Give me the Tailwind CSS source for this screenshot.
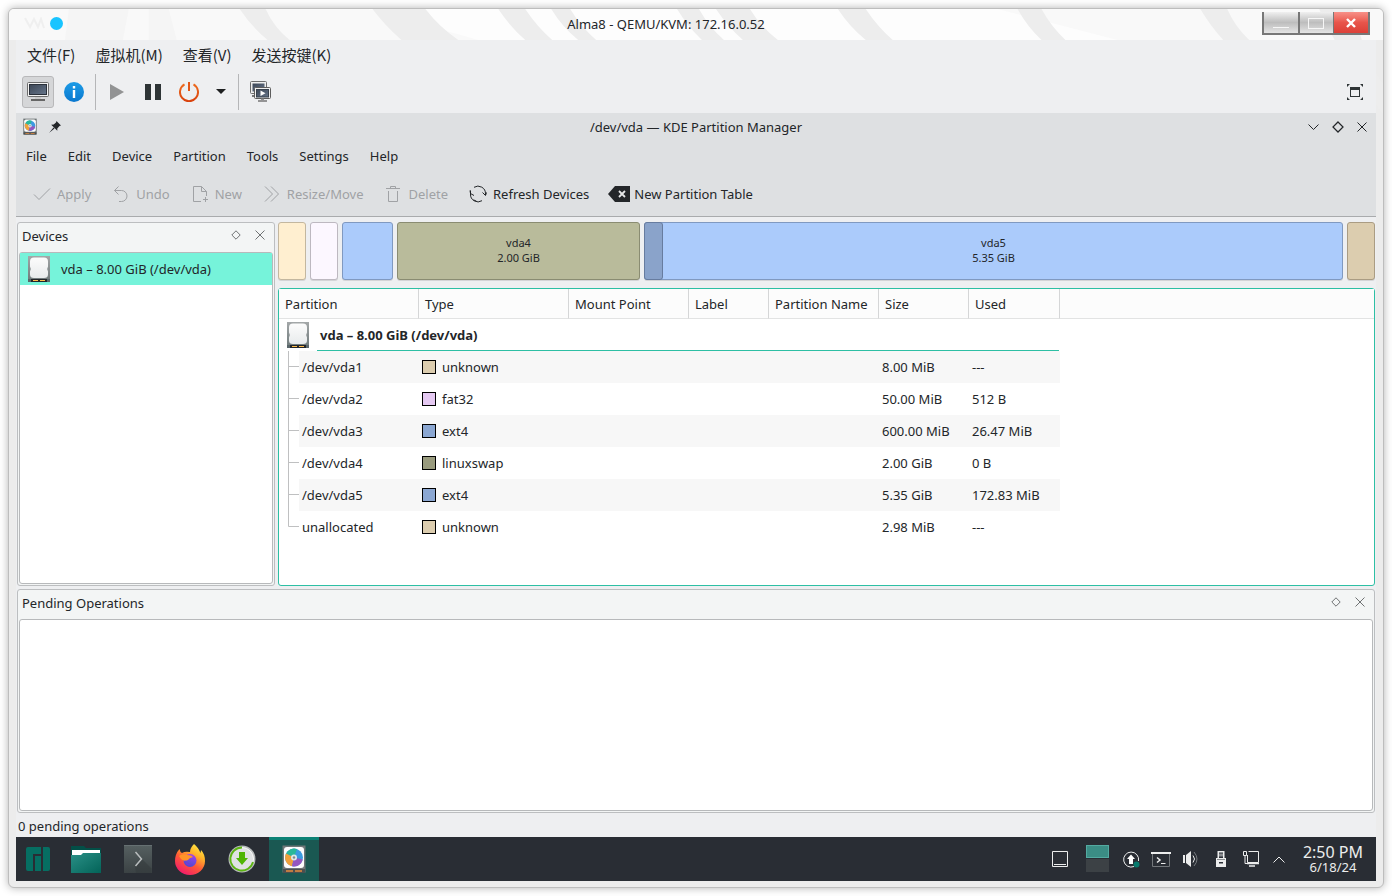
<!DOCTYPE html>
<html lang="en">
<head>
<meta charset="utf-8">
<title>Alma8 - QEMU/KVM</title>
<script src="https://cdn.jsdelivr.net/npm/@tailwindcss/browser@4"></script>
</head>
<body class="bg-white font-['Noto_Sans','Noto_Sans_CJK_SC',sans-serif] text-[13px] leading-5 text-[#232629]">
<svg class="absolute size-0" aria-hidden="true">
  <defs>
    <linearGradient id="screen" x1="0" y1="0" x2="1" y2="1"><stop offset="0" stop-color="#3c4655"/><stop offset="1" stop-color="#66758a"/></linearGradient>
    <linearGradient id="drive" x1="0" y1="0" x2="0" y2="1"><stop offset="0" stop-color="#a4a8a9"/><stop offset="1" stop-color="#6c7778"/></linearGradient>
    <linearGradient id="plate" x1="0" y1="0" x2="0" y2="1"><stop offset="0" stop-color="#fcfcfc"/><stop offset="1" stop-color="#e8ebec"/></linearGradient>
    <linearGradient id="info" x1="0" y1="0" x2="0" y2="1"><stop offset="0" stop-color="#1c9be6"/><stop offset="1" stop-color="#0a78cf"/></linearGradient>
    <linearGradient id="power" x1="0" y1="0" x2="0" y2="1"><stop offset="0" stop-color="#ed6b1f"/><stop offset="1" stop-color="#d9420d"/></linearGradient>
    <linearGradient id="folder" x1="0" y1="0" x2="1" y2="1"><stop offset="0" stop-color="#2a9087"/><stop offset="1" stop-color="#036358"/></linearGradient>
    <linearGradient id="term" x1="0" y1="0" x2="0" y2="1"><stop offset="0" stop-color="#566061"/><stop offset="1" stop-color="#3b4244"/></linearGradient>
    <linearGradient id="fox" x1="0.85" y1="0" x2="0.25" y2="1"><stop offset="0" stop-color="#fff04a"/><stop offset="0.3" stop-color="#ffb72a"/><stop offset="0.6" stop-color="#ff5a36"/><stop offset="1" stop-color="#f0166f"/></linearGradient>
    <linearGradient id="globe" x1="0.7" y1="0" x2="0.3" y2="1"><stop offset="0" stop-color="#a240f0"/><stop offset="1" stop-color="#4350c8"/></linearGradient>
    <symbol id="hdd" viewBox="0 0 22 26">
      <rect width="22" height="26" fill="url(#drive)"/>
      <path d="M6 1.500h10q4 0 4 4v5q-1.500 2 0 5v3q0 3.500-4 3.500H6q-4 0-4-3.500v-3q1.500-3 0-5v-5q0-4 4-4z" fill="url(#plate)"/>
      <rect y="23" width="22" height="3" fill="#59666a"/><rect x="3" y="23" width="16" height="3" fill="#232629"/>
      <path d="M5 24.500h5M12 24.500h5" stroke="#fdbc4b" stroke-width="1"/>
    </symbol>
    <symbol id="pm" viewBox="0 0 24 28">
      <rect x="0.500" y="0.500" width="23" height="27" fill="#6f7677"/>
      <rect x="2" y="2" width="20" height="21" rx="3" fill="#fcfcfc"/>
      <circle cx="12" cy="12.500" r="9" fill="#3c9be0"/>
      <path d="M12 12.500L4 8.500A9 9 0 0 1 15 4z" fill="#2ab89a"/>
      <path d="M12 12.500L4 8.500A9 9 0 0 0 10 21.300z" fill="#f0a13a"/>
      <path d="M12 12.500L10 21.300A9 9 0 0 0 20.800 14.500z" fill="#9457c0"/>
      <circle cx="12" cy="12.500" r="3" fill="#dfe6ea"/><circle cx="12" cy="12.500" r="1.200" fill="#7d8a90"/>
      <rect x="1" y="24" width="22" height="4" fill="#4b4f50"/><path d="M4 26h7M13 26h7" stroke="#c07c42" stroke-width="2"/>
    </symbol>
    <symbol id="diamond" viewBox="0 0 10 10"><path d="M5 0.800L9.200 5 5 9.200 0.800 5z" fill="none" stroke="currentColor"/></symbol>
    <symbol id="cross" viewBox="0 0 10 10"><path d="M0.500 0.500l9 9M9.500 0.500l-9 9" fill="none" stroke="currentColor"/></symbol>
  </defs>
</svg>

<div class="flex min-h-screen flex-col p-2">
<div class="relative flex flex-1 flex-col overflow-hidden rounded-md border border-[#bdbdbd] bg-[#ececec] px-[7px] pb-1.5 shadow-[0_0_8px_rgba(0,0,0,0.3)]">

  <svg class="absolute inset-x-0 top-0 h-[110px] w-full" viewBox="0 0 1376 110" preserveAspectRatio="none" aria-hidden="true">
    <rect width="1376" height="31" fill="#f9f9f9"/>
    <path d="M360 0h630l120 31H470z" fill="#fdfdfd"/>
    <path d="M60 0h60l-6 31H56zM140 0h20l8 31h-28z" fill="#f5f5f5"/>
    <g fill="#ededed">
      <path d="M231 0h26q8 18 24 31h-22Q243 18 231 0z"/><path d="M364 0h53q14 18 33 31h-57Q376 16 364 0z"/>
      <path d="M490 0h27q12 18 27 31h-27Q502 18 490 0z"/><path d="M543 0h19q11 18 26 31h-18Q554 18 543 0z"/>
      <path d="M669 0h22q10 18 25 31h-22Q680 18 669 0z"/><path d="M708 0h34q11 18 28 31h-35Q720 18 708 0z"/>
      <path d="M830 0h28q12 18 27 31h-27Q842 18 830 0z"/><path d="M1010 0h24q10 18 24 31h-24Q1020 18 1010 0z"/>
      <path d="M1193 0h27q8 18 22 31h-26Q1204 18 1193 0z"/><path d="M1312 0h34q12 50 30 75v30Q1340 60 1312 0z"/>
    </g>
  </svg>

  <header class="relative flex h-[31px] items-start justify-between">
    <div class="flex h-7 w-[54px] items-center gap-[5px] pl-2"><svg class="h-3 w-[21px]" viewBox="0 0 21 12" fill="none" stroke="#efefef" stroke-width="2" aria-hidden="true"><path d="M1 1l5 9 4-8 4 8 3-8 3 9"/></svg><svg class="size-[13px]" viewBox="0 0 13 13"><circle cx="6.500" cy="6.500" r="6.500" fill="#18c4ff"/></svg></div>
    <h1 class="pt-[5px]">Alma8 - QEMU/KVM: 172.16.0.52</h1>
    <div class="mt-[3px] mr-1.5 flex h-[23px] border-x-2 border-b-2 border-[#777]">
      <button aria-label="Minimize" class="flex w-[34px] items-center justify-center bg-linear-to-b from-[#f0f0f0] via-[#bdbdbd] to-[#e4e4e4]"><svg class="h-3 w-4" viewBox="0 0 16 12"><path d="M0 10.500h16" stroke="#f6f6f6"/></svg></button>
      <button aria-label="Maximize" class="flex w-[35px] items-center justify-center border-l-2 border-[#777] bg-linear-to-b from-[#f0f0f0] via-[#bdbdbd] to-[#e4e4e4]"><svg class="h-3 w-4" viewBox="0 0 16 12"><rect x="0.500" y="1.500" width="15" height="10" fill="none" stroke="#f6f6f6"/></svg></button>
      <button aria-label="Close" class="flex w-[35px] items-center justify-center border-l border-[#777] bg-linear-to-b from-[#f79088] via-[#e8554b] to-[#dc3f36]"><svg class="size-2.5" viewBox="0 0 10 10"><path d="M1 1l8 8M9 1l-8 8" stroke="#fff" stroke-width="2.400"/></svg></button>
    </div>
  </header>

  <div class="relative flex flex-1 flex-col bg-[#eeeff1]">
    <nav class="flex h-[31px] items-center gap-5 pb-0.5 pl-[11px] font-['Noto_Sans_CJK_SC',sans-serif] text-[15px]">
      <button>文件(F)</button><button>虚拟机(M)</button><button>查看(V)</button><button>发送按键(K)</button>
    </nav>

    <div class="flex h-[42px] items-center pr-[13px] pb-[1px] pl-1.5">
      <button aria-label="Console" class="flex size-8 items-center justify-center rounded-[3px] border border-[#b8b8ba] bg-[#d5d6d8]">
        <svg class="h-5 w-[22px]" viewBox="0 0 22 20"><rect x="0.500" y="0.500" width="21" height="14" rx="1" fill="#f2f2f2" stroke="#6d6d6d"/><rect x="2.500" y="2.500" width="17" height="10" fill="url(#screen)" stroke="#2b313b"/><path d="M8 15h6v2H8z" fill="#c9c9c9"/><path d="M4 18h14" stroke="#666" stroke-width="2"/></svg>
      </button>
      <button aria-label="Details" class="ml-2.5 size-5"><svg viewBox="0 0 20 20"><circle cx="10" cy="10" r="10" fill="url(#info)"/><path d="M10 4v2.600M10 8v8" stroke="#fff" stroke-width="2.400"/></svg></button>
      <span class="ml-[11px] h-9 w-px bg-[#b5b6b8]"></span>
      <button aria-label="Run" class="ml-3.5 h-4 w-3.5"><svg viewBox="0 0 14 16"><path d="M0 0l14 8-14 8z" fill="#929394"/></svg></button>
      <button aria-label="Pause" class="ml-[21px] h-4 w-4"><svg viewBox="0 0 16 16"><path d="M0 0h6v16H0zM10 0h6v16h-6z" fill="#2e3436"/></svg></button>
      <button aria-label="Shut down" class="ml-[18px] size-5"><svg viewBox="0 0 20 20" fill="none" stroke="url(#power)" stroke-width="2"><path d="M5.500 2.400a9 9 0 1 0 9 0"/><path d="M9 0h2v9H9z" fill="#e25618" stroke="none"/></svg></button>
      <button aria-label="Shutdown menu" class="ml-[17px] h-[5px] w-2.5"><svg viewBox="0 0 10 5"><path d="M0 0h10L5 5z" fill="#1d1f20"/></svg></button>
      <span class="ml-3 h-9 w-px bg-[#b5b6b8]"></span>
      <button aria-label="Snapshots" class="ml-[11px] h-[21px] w-[22px]"><svg viewBox="0 0 22 21"><rect x="0.500" y="0.500" width="16" height="12" rx="1" fill="#efefef" stroke="#6d6d6d"/><rect x="2.500" y="2.500" width="12" height="8" fill="url(#screen)"/><path d="M2 15h3" stroke="#777" stroke-width="2"/><rect x="4.500" y="6.500" width="16" height="11" rx="1" fill="#efefef" stroke="#5d5d5d"/><rect x="6.500" y="8.500" width="12" height="7.500" fill="url(#screen)" stroke="#39424e"/><path d="M10.500 9.500l5 2.700-5 2.700z" fill="#fff"/><path d="M8 20h9M11 18h3" stroke="#777" stroke-width="1.600"/></svg></button>
      <button aria-label="Fullscreen" class="ml-auto size-4"><svg viewBox="0 0 16 16" fill="#2e3436"><path d="M0 0h3L0 3zM13 0h3v3zM0 13l3 3H0zM16 13v3h-3z"/><path d="M3 3h10v10H3zM4 6v6h8V6z" fill-rule="evenodd"/></svg></button>
    </div>

    <div class="flex flex-col border-b border-[#a9abad] bg-[#dee0e2]">
      <div class="flex h-[29px] items-center justify-between pb-[2px]">
        <div class="flex w-[88px] items-center gap-3 pl-[7px]"><svg class="h-[17px] w-[14px]"><use href="#pm"/></svg>
          <button aria-label="Pin" class="size-3"><svg viewBox="0 0 12 12" fill="#232629"><path d="M7.500 0L12 4.500l-1.500.5-2.200 2.500v2.300L2.200 3.800l2.500-.2L7 1.500zM4.500 6.500l1 1L0 12z"/></svg></button></div>
        <h2>/dev/vda — KDE Partition Manager</h2>
        <div class="flex w-[88px] items-center justify-end gap-[13px] pr-[9px]">
          <button aria-label="Minimize window" class="h-1.5 w-[11px]"><svg viewBox="0 0 11 6"><path d="M0.500 0.500l5 5 5-5" fill="none" stroke="#232629"/></svg></button>
          <button aria-label="Maximize window" class="size-3"><svg class="size-3"><use href="#diamond"/></svg></button>
          <button aria-label="Close window" class="size-2.5"><svg class="size-2.5"><use href="#cross"/></svg></button>
        </div>
      </div>
      <nav class="flex h-[29px] items-center gap-[21px] pb-[2px] pl-2.5">
        <button>File</button><button>Edit</button><button>Device</button><button>Partition</button><button>Tools</button><button>Settings</button><button>Help</button>
      </nav>
      <div class="flex h-[45px] items-center gap-[19px] pl-[15px]">
        <button disabled class="flex items-center gap-1 text-[#a0a2a5]"><svg class="size-[22px]" viewBox="0 0 22 22" fill="none" stroke="currentColor"><path d="M3 11.500l5 5L19 5.500"/></svg>Apply</button>
        <button disabled class="flex items-center gap-1 text-[#a0a2a5]"><svg class="size-[22px]" viewBox="0 0 22 22" fill="none" stroke="currentColor"><path d="M8.500 3.500l-4 4 4 4M4.500 7.500h7a5.500 5.500 0 0 1 0 11H9"/></svg>Undo</button>
        <button disabled class="flex items-center gap-1 text-[#a0a2a5]"><svg class="size-[22px]" viewBox="0 0 22 22" fill="none" stroke="currentColor"><path d="M12 18.500H4.500v-15h8l5 5V13M12.500 3.500v5h5M16.500 14v5M14 16.500h5"/></svg>New</button>
        <button disabled class="flex items-center gap-1 text-[#a0a2a5]"><svg class="size-[22px]" viewBox="0 0 22 22" fill="none" stroke="currentColor"><path d="M4 3.500l7.500 7.500L4 18.500M10 3.500l7.500 7.500-7.500 7.500"/></svg>Resize/Move</button>
        <button disabled class="flex items-center gap-1 text-[#a0a2a5]"><svg class="size-[22px]" viewBox="0 0 22 22" fill="none" stroke="currentColor"><path d="M4 5.500h14M8.500 5V3.500h5V5M6.500 8v10.500h9V8"/></svg>Delete</button>
        <button class="flex items-center gap-1"><svg class="size-[22px]" viewBox="0 0 22 22" fill="none" stroke="currentColor"><path d="M7 4.300A7.500 7.500 0 0 1 18.500 11v1M15.500 9.500l3 3 1-3M15 17.700A7.500 7.500 0 0 1 3.500 11V7.500M3 7.500l.5 3L7 12.500M9.500 18.300l-3-1.500"/></svg>Refresh Devices</button>
        <button class="flex items-center gap-1"><svg class="size-[22px]" viewBox="0 0 22 22"><path d="M0 11l7-8h15v16H7z" fill="#232629"/><path d="M11 8l6 6M17 8l-6 6" stroke="#e6e7e8" stroke-width="1.800"/></svg>New Partition Table</button>
      </div>
    </div>

    <main class="flex flex-1 flex-col gap-[3px] px-px pt-[5px]">
      <div class="flex gap-[3px]">
        <section class="flex w-[258px] shrink-0 flex-col rounded-[3px] border border-[#bcbec0] bg-[#f3f5f5] px-px pb-px">
          <div class="flex h-[29px] items-center pr-1 pb-[3px] pl-[3px]"><h3 class="mr-auto">Devices</h3>
            <button aria-label="Float devices" class="mr-3.5 mb-0.5 size-2.5 text-[#6f7273]"><svg class="size-2.5"><use href="#diamond"/></svg></button>
            <button aria-label="Close devices" class="mr-1 mb-0.5 size-2.5 text-[#6f7273]"><svg class="size-2.5"><use href="#cross"/></svg></button></div>
          <ul class="flex-1 rounded-[3px] border border-[#b7b9bb] bg-white">
            <li class="flex h-8 items-center gap-[11px] bg-[#76f3da] pl-2"><svg class="h-[26px] w-[22px]"><use href="#hdd"/></svg>vda – 8.00 GiB (/dev/vda)</li>
          </ul>
        </section>

        <div class="flex min-w-0 flex-1 flex-col gap-2">
          <div class="flex h-[58px] gap-1 text-center text-[11px] leading-[15px]">
            <div class="w-7 rounded-[3px] border border-[#c3b79f] bg-[#ffefd0] shadow-[0_1px_0_#d3d4d6]"></div>
            <div class="w-7 rounded-[3px] border border-[#bdb8c0] bg-[#fcf7ff] shadow-[0_1px_0_#d3d4d6]"></div>
            <div class="w-[51px] rounded-[3px] border border-[#8099c0] bg-[#abcbfb] shadow-[0_1px_0_#d3d4d6]"></div>
            <div class="flex grow-[241] basis-0 flex-col justify-center rounded-[3px] border border-[#8a8c72] bg-[#b9bb9b] pb-[3px] shadow-[0_1px_0_#d3d4d6]"><span>vda4</span><span>2.00 GiB</span></div>
            <div class="relative flex grow-[697] basis-0 flex-col justify-center rounded-[3px] border border-[#8099c0] bg-[#abcbfb] pb-[3px] shadow-[0_1px_0_#d3d4d6]"><span class="absolute -inset-y-px -left-px w-[19px] rounded-[3px] border border-[#677c9f] bg-[#8aa3ca]"></span><span>vda5</span><span>5.35 GiB</span></div>
            <div class="w-7 rounded-[3px] border border-[#aa9c83] bg-[#dccdaf] shadow-[0_1px_0_#d3d4d6]"></div>
          </div>

          <div class="h-[298px] rounded-[3px] border border-[#2dbfa4] bg-white">
            <table class="w-full table-fixed border-separate border-spacing-0 text-left">
              <colgroup><col class="w-[140px]"><col class="w-[150px]"><col class="w-[120px]"><col class="w-[80px]"><col class="w-[110px]"><col class="w-[90px]"><col class="w-[91px]"><col></colgroup>
              <thead><tr class="h-[30px] bg-[#fcfcfc] whitespace-nowrap">
                <th class="border-r border-b border-[#d5d6d7] border-b-[#e2e3e3] pl-1.5 font-normal">Partition</th>
                <th class="border-r border-b border-[#d5d6d7] border-b-[#e2e3e3] pl-1.5 font-normal">Type</th>
                <th class="border-r border-b border-[#d5d6d7] border-b-[#e2e3e3] pl-1.5 font-normal">Mount Point</th>
                <th class="border-r border-b border-[#d5d6d7] border-b-[#e2e3e3] pl-1.5 font-normal">Label</th>
                <th class="border-r border-b border-[#d5d6d7] border-b-[#e2e3e3] pl-1.5 font-normal">Partition Name</th>
                <th class="border-r border-b border-[#d5d6d7] border-b-[#e2e3e3] pl-1.5 font-normal">Size</th>
                <th class="border-r border-b border-[#d5d6d7] border-b-[#e2e3e3] pl-1.5 font-normal">Used</th>
                <td class="border-b border-[#e2e3e3]"></td>
              </tr></thead>
              <tbody>
                <tr class="h-8"><th colspan="7" class="p-0"><div class="flex h-8 pl-2"><svg class="mt-[3px] h-[26px] w-[22px]"><use href="#hdd"/></svg><div class="mr-px ml-2 flex flex-1 items-center border-b border-[#2dbfa4] pl-[3px]">vda – 8.00 GiB (/dev/vda)</div></div></th><td></td></tr>
                <tr class="h-8"><td class="p-0"><div class="flex h-8 pl-[9px]"><svg class="h-8 w-[11px]" fill="none" stroke="#bfc0c1"><path d="M0.500 0v32M0 15.500h11"/></svg><span class="flex flex-1 items-center bg-[#f7f7f7] pl-[3px]">/dev/vda1</span></div></td><td class="bg-[#f7f7f7] p-0 pl-[3px]"><div class="flex items-center gap-1.5"><i class="size-3.5 border border-black bg-[#dccdaf]"></i>unknown</div></td><td class="bg-[#f7f7f7]"></td><td class="bg-[#f7f7f7]"></td><td class="bg-[#f7f7f7]"></td><td class="bg-[#f7f7f7] p-0 pl-[3px]">8.00 MiB</td><td class="bg-[#f7f7f7] p-0 pl-[3px]">---</td><td></td></tr>
                <tr class="h-8"><td class="p-0"><div class="flex h-8 pl-[9px]"><svg class="h-8 w-[11px]" fill="none" stroke="#bfc0c1"><path d="M0.500 0v32M0 15.500h11"/></svg><span class="flex flex-1 items-center pl-[3px]">/dev/vda2</span></div></td><td class="p-0 pl-[3px]"><div class="flex items-center gap-1.5"><i class="size-3.5 border border-black bg-[#e5c9f2]"></i>fat32</div></td><td></td><td></td><td></td><td class="p-0 pl-[3px]">50.00 MiB</td><td class="p-0 pl-[3px]">512 B</td><td></td></tr>
                <tr class="h-8"><td class="p-0"><div class="flex h-8 pl-[9px]"><svg class="h-8 w-[11px]" fill="none" stroke="#bfc0c1"><path d="M0.500 0v32M0 15.500h11"/></svg><span class="flex flex-1 items-center bg-[#f7f7f7] pl-[3px]">/dev/vda3</span></div></td><td class="bg-[#f7f7f7] p-0 pl-[3px]"><div class="flex items-center gap-1.5"><i class="size-3.5 border border-black bg-[#8ba7d2]"></i>ext4</div></td><td class="bg-[#f7f7f7]"></td><td class="bg-[#f7f7f7]"></td><td class="bg-[#f7f7f7]"></td><td class="bg-[#f7f7f7] p-0 pl-[3px]">600.00 MiB</td><td class="bg-[#f7f7f7] p-0 pl-[3px]">26.47 MiB</td><td></td></tr>
                <tr class="h-8"><td class="p-0"><div class="flex h-8 pl-[9px]"><svg class="h-8 w-[11px]" fill="none" stroke="#bfc0c1"><path d="M0.500 0v32M0 15.500h11"/></svg><span class="flex flex-1 items-center pl-[3px]">/dev/vda4</span></div></td><td class="p-0 pl-[3px]"><div class="flex items-center gap-1.5"><i class="size-3.5 border border-black bg-[#999b7e]"></i>linuxswap</div></td><td></td><td></td><td></td><td class="p-0 pl-[3px]">2.00 GiB</td><td class="p-0 pl-[3px]">0 B</td><td></td></tr>
                <tr class="h-8"><td class="p-0"><div class="flex h-8 pl-[9px]"><svg class="h-8 w-[11px]" fill="none" stroke="#bfc0c1"><path d="M0.500 0v32M0 15.500h11"/></svg><span class="flex flex-1 items-center bg-[#f7f7f7] pl-[3px]">/dev/vda5</span></div></td><td class="bg-[#f7f7f7] p-0 pl-[3px]"><div class="flex items-center gap-1.5"><i class="size-3.5 border border-black bg-[#8ba7d2]"></i>ext4</div></td><td class="bg-[#f7f7f7]"></td><td class="bg-[#f7f7f7]"></td><td class="bg-[#f7f7f7]"></td><td class="bg-[#f7f7f7] p-0 pl-[3px]">5.35 GiB</td><td class="bg-[#f7f7f7] p-0 pl-[3px]">172.83 MiB</td><td></td></tr>
                <tr class="h-8"><td class="p-0"><div class="flex h-8 pl-[9px]"><svg class="h-8 w-[11px]" fill="none" stroke="#bfc0c1"><path d="M0.500 0v15.500h11"/></svg><span class="flex flex-1 items-center pl-[3px]">unallocated</span></div></td><td class="p-0 pl-[3px]"><div class="flex items-center gap-1.5"><i class="size-3.5 border border-black bg-[#dccdaf]"></i>unknown</div></td><td></td><td></td><td></td><td class="p-0 pl-[3px]">2.98 MiB</td><td class="p-0 pl-[3px]">---</td><td></td></tr>
              </tbody>
            </table>
          </div>
        </div>
      </div>

      <section class="flex flex-1 flex-col rounded-[3px] border border-[#bcbec0] bg-[#f3f5f5] px-px pb-px">
        <div class="flex h-[29px] items-center pr-1 pb-[3px] pl-[3px]"><h3 class="mr-auto">Pending Operations</h3>
          <button aria-label="Float pending operations" class="mr-3.5 mb-0.5 size-2.5 text-[#6f7273]"><svg class="size-2.5"><use href="#diamond"/></svg></button>
          <button aria-label="Close pending operations" class="mr-1 mb-0.5 size-2.5 text-[#6f7273]"><svg class="size-2.5"><use href="#cross"/></svg></button></div>
        <div class="flex-1 rounded-[3px] border border-[#b7b9bb] bg-white"></div>
      </section>
    </main>
    <p class="flex h-6 items-center pt-[2px] pl-0.5">0 pending operations</p>

    <footer class="flex h-11 items-center bg-[#292d34] text-[#eceded]">
      <button aria-label="Application menu" class="flex h-11 w-11 items-center justify-center"><svg class="size-6" viewBox="0 0 24 24"><path d="M2 0h13v7H7v17H2q-2 0-2-2V2q0-2 2-2zM9 9h6v15H9zM17 0h5q2 0 2 2v20q0 2-2 2h-5z" fill="#066e62"/></svg></button>
      <button aria-label="Files" class="flex h-11 w-[52px] items-center justify-center"><svg class="h-7 w-[30px]" viewBox="0 0 30 28"><path d="M0 1h13l2 2h15v10H0z" fill="#034f47"/><path d="M1 5h28v9H1z" fill="#fff"/><path d="M0 10h10l2-2h18v20H0z" fill="url(#folder)"/></svg></button>
      <button aria-label="Terminal" class="flex h-11 w-[52px] items-center justify-center"><svg class="size-7" viewBox="0 0 28 28"><rect width="28" height="28" fill="url(#term)"/><path d="M0 .5h28" stroke="#667072"/><path d="M18 14l9.500 9.500V28H12l-1-7z" fill="#31383a" opacity=".5"/><path d="M11.500 7l6 7-6 7" fill="none" stroke="#b9bdbe" stroke-width="1.500"/></svg></button>
      <button aria-label="Firefox" class="flex h-11 w-[52px] items-center justify-center"><svg class="h-[31px] w-[30px]" viewBox="0 0 30 31"><path d="M19 0q-4 4-4 8Q10 7 7 9 5 8 4.500 5 0 10 0 17a15 14 0 0 0 30 0q0-7-4-11l-.5 3Q23 3 19 0z" fill="url(#fox)"/><circle cx="15" cy="16.500" r="6.500" fill="url(#globe)"/><path d="M4 12q3-3 8-1 5 0 6 2-4 1-5 3-4 2-7-1z" fill="#ff9428"/><path d="M10 16q2 5 8 4-4 3-7 0z" fill="#753ad8"/></svg></button>
      <button aria-label="Downloads" class="flex h-11 w-[52px] items-center justify-center"><svg class="size-7" viewBox="0 0 28 28"><circle cx="14" cy="14" r="13.500" fill="#b9bdbe"/><circle cx="14" cy="14" r="11.500" fill="#dfe2e3" stroke="#fafafa"/><path d="M14 2.500A11.500 11.500 0 1 0 25 17" fill="none" stroke="#5cb413" stroke-width="1.800"/><path d="M11 7h6v6h3l-6 7-6-7h3z" fill="#4fb505"/></svg></button>
      <button aria-label="Partition Manager" class="flex h-11 w-[51px] items-center justify-end"><span class="flex h-11 w-[50px] items-center justify-center border-t-[3px] border-[#0b8175] bg-[#1a5852] pb-[3px]"><svg class="h-7 w-6"><use href="#pm"/></svg></span></button>

      <div class="ml-auto flex items-center pr-[13px]">
        <button aria-label="Show desktop" class="size-4"><svg viewBox="0 0 16 16" fill="none" stroke="#eceded"><path d="M.5.5h15v15H.500zM2 13.500h12"/></svg></button>
        <button aria-label="Desktop pager" class="mr-3.5 ml-[18px] flex h-7 w-[23px] flex-col"><span class="h-[13px] w-full border border-[#53aaa1] bg-[#3b8d85]"></span><span class="mt-px h-[13px] w-full bg-[#3c4145]"></span></button>
        <button aria-label="Updates" class="size-[17px]"><svg viewBox="0 0 17 17"><path d="M11 15.500A7.500 7.500 0 1 1 15.500 10" fill="none" stroke="#eceded"/><path d="M8 3.500l4 4.500h-2v5H6V8H4z" fill="#fff"/><circle cx="13.500" cy="13.500" r="3" fill="#087a6d"/></svg></button>
        <button aria-label="Console tray" class="ml-[11px] h-[15px] w-5"><svg viewBox="0 0 20 15" fill="none" stroke="#eceded"><path d="M0 1h20" stroke-width="2"/><path d="M1.500 2v12.500h17V2" stroke="#73777b"/><path d="M6 5.500l3 2.500-3 2.500" stroke-width="1.500"/><path d="M10 11.500h4.500"/></svg></button>
        <button aria-label="Volume" class="ml-3 size-4"><svg viewBox="0 0 16 16" fill="none"><path d="M0 4h2v8H0zM3 4l5-4v16l-5-4z" fill="#eceded"/><path d="M10 4.500q3 3.500 0 7" stroke="#eceded"/><path d="M11 1q6 7 0 14" stroke="#777b7f"/></svg></button>
        <button aria-label="Removable devices" class="ml-[17px] h-4 w-2.5"><svg viewBox="0 0 10 16" fill="#eceded"><path d="M1.500 0h7v7H10v9H0V7h1.500zM3 1.500V7h4V1.500zM1 8.500V9h8v-.5zM3 11v1.500h4V11z" fill-rule="evenodd"/><path d="M3.500 2.500h1v3h-1zM5.500 2.500h1v3h-1z"/></svg></button>
        <button aria-label="Network" class="ml-[17px] size-4"><svg viewBox="0 0 16 16" fill="none" stroke="#eceded"><path d="M.5.5h3v4h-3zM2 5v7.500h3M5.500.500h10v11h-11V4"/><path d="M4 12.500h12M6 15h6" stroke-width="1.500"/></svg></button>
        <button aria-label="Show hidden icons" class="ml-3.5 h-[7px] w-3"><svg viewBox="0 0 12 7"><path d="M.5 6.500L6 1l5.500 5.500" fill="none" stroke="#eceded"/></svg></button>
        <time class="ml-[18px] flex flex-col items-center pb-[1px]"><span class="text-base leading-4">2:50 PM</span><span class="text-[13px] leading-[14px]">6/18/24</span></time>
      </div>
    </footer>
  </div>
</div>
</div>
</body>
</html>
